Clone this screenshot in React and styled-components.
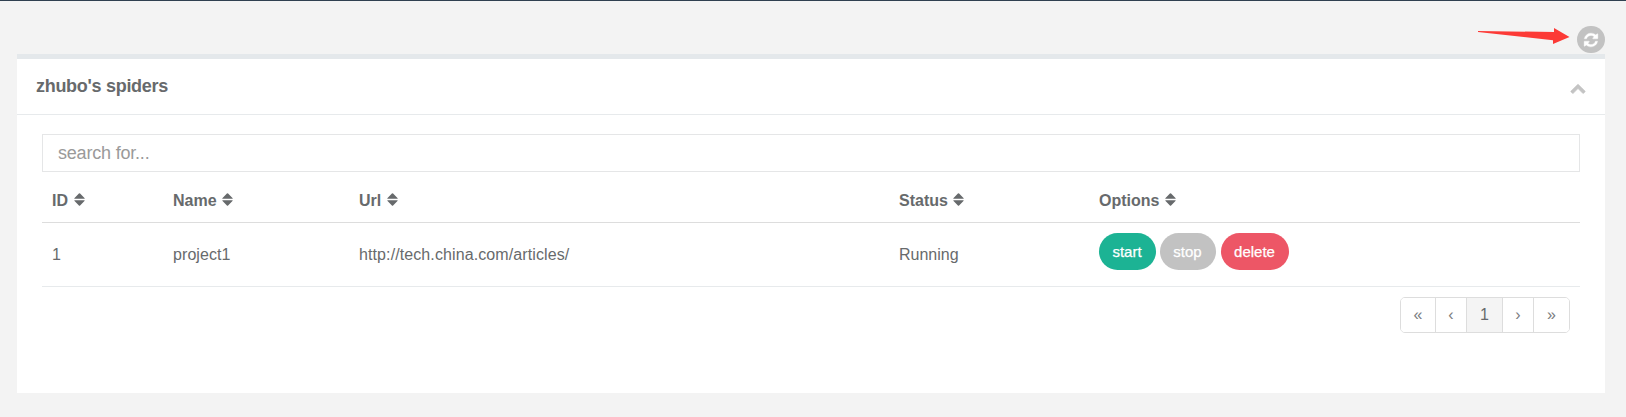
import React from "react";
import styled, { createGlobalStyle } from "styled-components";

const GlobalStyle = createGlobalStyle`
  *, *::before, *::after { box-sizing: border-box; }
  body {
    margin: 0;
    background: #f3f3f3;
    color: #676a6c;
    font: 16px/24px "Liberation Sans", Arial, sans-serif;
  }
`;

const Page = styled.main`
  min-height: 417px;
  border-top: 1px solid #2f4050;
  padding: 25px 21px 24px 17px;
`;

const Toolbar = styled.div`
  display: flex;
  justify-content: flex-end;
  align-items: flex-start;
  height: 28px;
`;

const Arrow = styled.svg`
  width: 94px;
  height: 20px;
  margin: 1px 5px 0 0;
  fill: #fc3a36;
`;

const RefreshButton = styled.button`
  display: flex;
  align-items: center;
  justify-content: center;
  width: 28px;
  height: 27px;
  padding: 0;
  border: 0;
  border-radius: 14px;
  background: #c2c2c2;
  color: #fff;
  svg { width: 16px; height: 16px; fill: currentColor; stroke: currentColor; stroke-width: 40px; }
`;

const Panel = styled.section`
  height: 339px;
  border-top: 5px solid #e4e8eb;
  background: #fff;
`;

const PanelHeader = styled.header`
  display: flex;
  justify-content: space-between;
  height: 56px;
  padding: 15px 19px 0 19px;
  border-bottom: 1px solid #e7eaec;
`;

const Title = styled.h5`
  margin: 0;
  font-size: 18px;
  line-height: 24px;
  letter-spacing: -0.29px;
`;

const CollapseIcon = styled.svg`
  width: 16px;
  height: 16px;
  margin-top: 6px;
  fill: #c4c4c4;
  stroke: #c4c4c4;
  stroke-width: 60px;
`;

const PanelBody = styled.div`
  padding: 19px 25px 0;
`;

const SearchInput = styled.input`
  display: block;
  width: 100%;
  height: 38px;
  padding: 0 15px;
  border: 1px solid #e5e6e7;
  background: #fff;
  font: 18px "Liberation Sans", Arial, sans-serif;
  letter-spacing: -0.2px;
  color: inherit;
  &::placeholder { color: #9a9a9a; opacity: 1; }
`;

const Table = styled.div`
  display: flex;
  flex-direction: column;
`;

const Row = styled.div`
  display: grid;
  grid-template-columns: 121px 186px 540px 200px 1fr;
  height: ${(p) => (p.$head ? 51 : 64)}px;
  border-bottom: 1px solid ${(p) => (p.$head ? "#dddddd" : "#e7eaec")};
  font-weight: ${(p) => (p.$head ? "bold" : "normal")};
`;

const Cell = styled.div`
  padding: ${(p) => p.$top}px 10px 0;
  letter-spacing: ${(p) => p.$tracking || 0}px;
`;

const HeadCell = styled(Cell)`
  display: flex;
  gap: 5.5px;
`;

const SortIcon = styled.svg`
  width: 11px;
  height: 13px;
  margin-top: 4px;
  fill: #676a6c;
`;

const Actions = styled(Cell)`
  display: flex;
  align-items: flex-start;
`;

const ActionButton = styled.button`
  width: ${(p) => p.$width}px;
  height: 37px;
  margin-right: ${(p) => p.$gap || 0}px;
  padding: 0 1px 1px 0;
  border: 0;
  border-radius: 18.5px;
  background: ${(p) => p.$color};
  color: #fff;
  font: 15px "Liberation Sans", Arial, sans-serif;
  -webkit-text-stroke: 0.25px #fff;
`;

const Pagination = styled.nav`
  display: flex;
  width: 170px;
  height: 36px;
  margin: 10px 10px 0 auto;
  border: 1px solid #dddddd;
  border-radius: 5px;
  overflow: hidden;
`;

const PageLink = styled.a`
  width: ${(p) => p.$width}px;
  padding-top: 5px;
  border-right: ${(p) => (p.$last ? 0 : 1)}px solid #dddddd;
  background: ${(p) => (p.$active ? "#f4f4f4" : "#fff")};
  color: ${(p) => (p.$active ? "#676a6c" : "#7a7c7e")};
  text-align: center;
`;

const columns = ["ID", "Name", "Url", "Status", "Options"];
const projects = [
  { id: 1, name: "project1", url: "http://tech.china.com/articles/", status: "Running" },
];
const pages = [
  { label: "«", width: 35 },
  { label: "‹", width: 31 },
  { label: "1", width: 36, active: true },
  { label: "›", width: 31 },
  { label: "»", width: 35, last: true },
];

export default function App() {
  return (
    <>
      <GlobalStyle />
      <Page>
        <Toolbar>
          <Arrow viewBox="0 0 94 20">
            <path d="M0 4L76 5L76 1L91.500 10L75 17L75 13.200L0 5Z" />
          </Arrow>
          <RefreshButton aria-label="Refresh">
            <svg viewBox="0 0 1792 1792">
              <path d="M1639 1056q0 5-1 7-64 268-268 434.500t-478 166.500q-146 0-282.500-55t-243.500-157l-129 129q-19 19-45 19t-45-19-19-45v-448q0-26 19-45t45-19h448q26 0 45 19t19 45-19 45l-137 137q71 66 161 102t187 36q134 0 250-65t186-179q11-17 53-117 8-23 30-23h192q13 0 22.500 9.500t9.500 22.500zm25-800v448q0 26-19 45t-45 19h-448q-26 0-45-19t-19-45 19-45l138-138q-148-137-349-137-134 0-250 65t-186 179q-11 17-53 117-8 23-30 23h-199q-13 0-22.500-9.500t-9.500-22.500v-7q65-268 270-434.500t480-166.500q146 0 284 55.500t245 156.500l130-129q19-19 45-19t45 19 19 45z" />
            </svg>
          </RefreshButton>
        </Toolbar>
        <Panel>
          <PanelHeader>
            <Title>zhubo's spiders</Title>
            <CollapseIcon viewBox="0 0 1792 1792">
              <path d="M1683 1331l-166 165q-19 19-45 19t-45-19l-531-531-531 531q-19 19-45 19t-45-19l-166-165q-19-19-19-45.500t19-45.500l742-741q19-19 45-19t45 19l742 741q19 19 19 45.500t-19 45.500z" />
            </CollapseIcon>
          </PanelHeader>
          <PanelBody>
            <SearchInput placeholder="search for..." />
            <Table>
              <Row $head>
                {columns.map((name) => (
                  <HeadCell key={name} $top={17}>
                    {name}
                    <SortIcon viewBox="0 0 11 13">
                      <path d="M.3 5.200L4.900 .4Q5.500 0 6.100 .4L10.700 5.200Q10.800 5.700 10.300 5.700H.7Q.2 5.700.3 5.200ZM.3 7.700L4.900 12.400Q5.500 12.900 6.100 12.400L10.700 7.700Q10.800 7.200 10.300 7.200H.7Q.2 7.200.3 7.700Z" />
                    </SortIcon>
                  </HeadCell>
                ))}
              </Row>
              {projects.map((p) => (
                <Row key={p.id}>
                  <Cell $top={20}>{p.id}</Cell>
                  <Cell $top={20} $tracking={0.08}>{p.name}</Cell>
                  <Cell $top={20} $tracking={0.1}>{p.url}</Cell>
                  <Cell $top={20}>{p.status}</Cell>
                  <Actions $top={10}>
                    <ActionButton $width={57} $gap={4} $color="#1cb394">start</ActionButton>
                    <ActionButton $width={56} $gap={5} $color="#c2c2c2">stop</ActionButton>
                    <ActionButton $width={68} $color="#ed5666">delete</ActionButton>
                  </Actions>
                </Row>
              ))}
            </Table>
            <Pagination>
              {pages.map((p) => (
                <PageLink key={p.label} $width={p.width} $active={p.active} $last={p.last}>
                  {p.label}
                </PageLink>
              ))}
            </Pagination>
          </PanelBody>
        </Panel>
      </Page>
    </>
  );
}
